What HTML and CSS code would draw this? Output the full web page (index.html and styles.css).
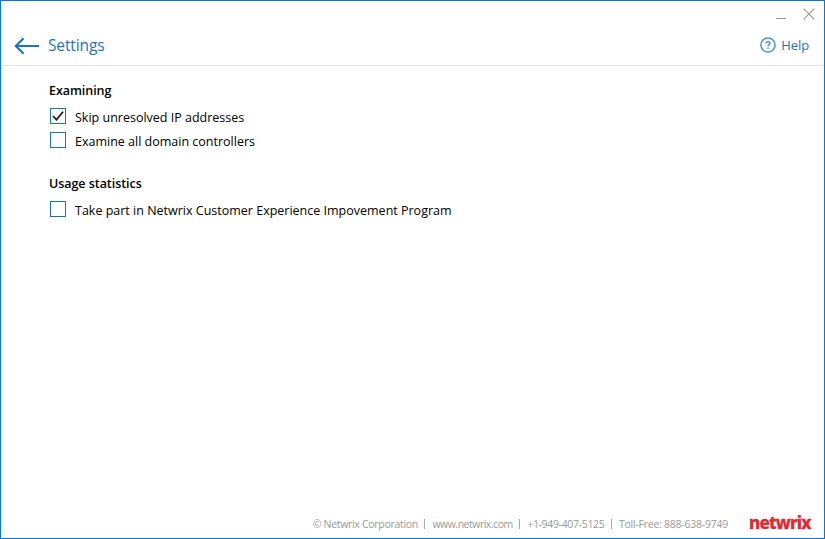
FILE: index.html
```html
<!DOCTYPE html>
<html lang="en">
<head>
<meta charset="utf-8">
<title>Settings</title>
<link rel="stylesheet" href="styles.css">
</head>
<body>
<div class="window">
  <header class="top">
    <div class="titlebar">
      <svg class="minimize" width="12" height="12" viewBox="0 0 12 12"><path d="M1 10.5h10"/></svg>
      <svg class="close" width="12" height="12" viewBox="0 0 12 12"><path d="M.7.7l10.6 10.6M11.3.7L.7 11.3"/></svg>
    </div>
    <div class="nav">
      <svg class="back" width="26" height="18" viewBox="0 0 26 18"><path d="M25 9H1.7M9.6 1.2L1.7 9l7.9 7.8"/></svg>
      <h1>Settings</h1>
      <a class="help">
        <svg width="16" height="16" viewBox="0 0 16 16"><circle cx="8" cy="8" r="7.1"/><path d="M6 6.3C6 4.2 9.9 4.2 9.9 6.3C9.9 7.6 8 7.6 8 9.3M8 10.4v1.4"/></svg>
        <span>Help</span>
      </a>
    </div>
  </header>
  <main>
    <section>
      <h2>Examining</h2>
      <div class="option"><span class="box"><svg width="14" height="14" viewBox="0 0 14 14"><path d="M2 7l3.5 3.8L12 2.8"/></svg></span><span>Skip unresolved IP addresses</span></div>
      <div class="option"><span class="box"></span><span>Examine all domain controllers</span></div>
    </section>
    <section>
      <h2>Usage statistics</h2>
      <div class="option"><span class="box"></span><span>Take part in Netwrix Customer Experience Impovement Program</span></div>
    </section>
  </main>
  <footer>
    <span class="company">© Netwrix Corporation</span><i></i><span class="site">www.netwrix.com</span><i></i><span class="phone">+1-949-407-5125</span><i></i><span class="toll">Toll-Free: 888-638-9749</span>
    <strong>netwrix</strong>
  </footer>
</div>
</body>
</html>
```
FILE: styles.css
```css
* { box-sizing: border-box; }
body { margin: 0; font-family: "Open Sans", "Noto Sans", sans-serif; font-size: 13px; color: #000; }
.window { height: 539px; border: 1px solid #0878c8; background: #fff; display: flex; flex-direction: column; }
svg { display: block; flex: none; fill: none; }
.top { height: 65px; border-bottom: 1px solid #e3e3e3; }
.titlebar { height: 24px; padding: 7px 9px 0 0; display: flex; justify-content: flex-end; gap: 16px; stroke: #999; }
.close { stroke-width: 1.1; }
.nav { height: 40px; padding: 0 15px 0 13px; display: flex; align-items: center; color: #1b74bb; }
.back { stroke: #1b74bb; stroke-width: 2; margin-top: 1px; }
h1 { margin: -1px 0 0 8px; font-size: 15.5px; font-weight: 400; line-height: 20px; letter-spacing: -.13px; }
.help { margin-left: auto; display: flex; align-items: center; gap: 5px; letter-spacing: -.1px; }
.help svg { stroke: #4a97d0; stroke-width: 1.5; }
main { flex: 1; padding: 16px 48px; }
section { height: 93px; }
h2 { margin: 0 0 4px; font-size: 12.5px; line-height: 18px; font-weight: 600; white-space: nowrap; letter-spacing: -.05px; }
.option { height: 24px; padding-left: 1px; display: flex; align-items: center; font-size: 12.5px; white-space: nowrap; }
.option span:last-child { margin: 2px 0 0 9px; }
.box { flex: none; width: 16px; height: 16px; border: 1px solid #1b74bb; }
.box svg { stroke: #111; stroke-width: 1.7; }
footer { height: 29px; padding-right: 13px; display: flex; align-items: center; justify-content: flex-end; font-size: 10.5px; color: #999; white-space: nowrap; }
.company { letter-spacing: -.3px; }
.site { letter-spacing: -.49px; }
.phone { letter-spacing: -.33px; }
.toll { letter-spacing: -.24px; }
footer i { width: 1px; height: 10px; margin: 0 7px 0 6.5px; background: #aaa; }
strong { margin: -2px 0 0 21px; width: 62px; font-family: "Noto Sans", sans-serif; font-size: 17px; font-weight: 800; line-height: 20px; letter-spacing: -.8px; color: #dc2b35; -webkit-text-stroke: .3px #dc2b35; }
```
